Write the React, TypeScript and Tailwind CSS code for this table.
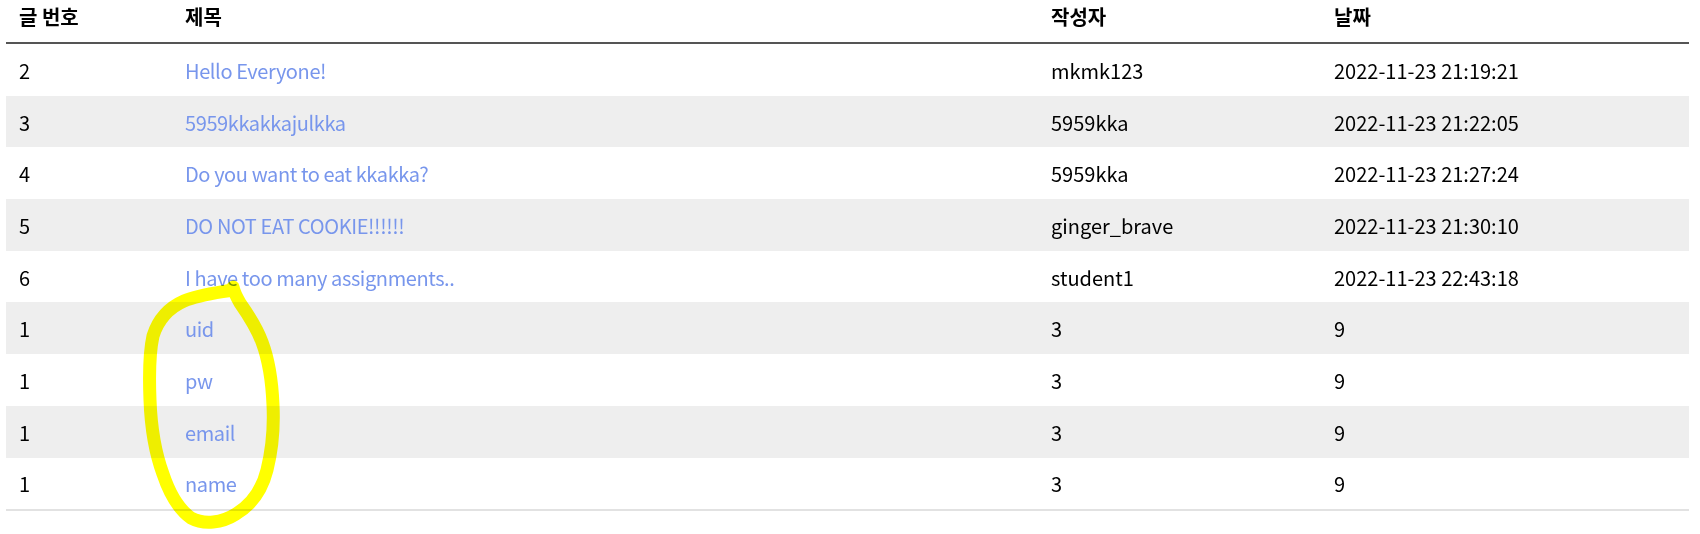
import React from "react";

const rows = [
  { no: "2", title: "Hello Everyone!", author: "mkmk123", date: "2022-11-23 21:19:21" },
  { no: "3", title: "5959kkakkajulkka", author: "5959kka", date: "2022-11-23 21:22:05" },
  { no: "4", title: "Do you want to eat kkakka?", author: "5959kka", date: "2022-11-23 21:27:24" },
  { no: "5", title: "DO NOT EAT COOKIE!!!!!!", author: "ginger_brave", date: "2022-11-23 21:30:10" },
  { no: "6", title: "I have too many assignments..", author: "student1", date: "2022-11-23 22:43:18" },
  { no: "1", title: "uid", author: "3", date: "9" },
  { no: "1", title: "pw", author: "3", date: "9" },
  { no: "1", title: "email", author: "3", date: "9" },
  { no: "1", title: "name", author: "3", date: "9" },
];

export default function App() {
  return (
    <div
      className="relative w-[1700px] h-[534px] bg-white text-black text-[20px] overflow-hidden"
      style={{ fontFamily: '"Noto Sans CJK KR", "Noto Sans", sans-serif' }}
    >
      <div className="ml-[6px] w-[1683px]">
        <div className="grid grid-cols-[166px_866px_283px_368px] h-[44px] border-b-2 border-[#555555] font-bold">
          <div className="pl-[13px] pt-[4px] leading-[26px]">글 번호</div>
          <div className="pl-[13px] pt-[4px] leading-[26px]">제목</div>
          <div className="pl-[13px] pt-[4px] leading-[26px]">작성자</div>
          <div className="pl-[13px] pt-[4px] leading-[26px]">날짜</div>
        </div>
        {rows.map((r, i) => (
          <div
            key={i}
            className={`grid grid-cols-[166px_866px_283px_368px] h-[51.7px] items-center leading-[26px] pt-[2px] ${
              i % 2 === 1 ? "bg-[#eeeeee]" : "bg-white"
            }`}
          >
            <div className="pl-[13px]">{r.no}</div>
            <div className="pl-[13px] text-[#7896ec] tracking-[-0.4px]">{r.title}</div>
            <div className="pl-[13px]">{r.author}</div>
            <div className="pl-[13px]">{r.date}</div>
          </div>
        ))}
        <div className="h-[2px] bg-[#e2e2e2]" />
      </div>
      <svg
        className="absolute left-0 top-0 pointer-events-none mix-blend-multiply"
        width="1700"
        height="534"
        viewBox="0 0 1700 534"
      >
        <path
          d="M232 290 C 215 293, 198 295, 184 301 C 168 308, 158 320, 153 336 C 149 354, 149 375, 150 400 C 151 428, 156 455, 163 474 C 169 492, 177 508, 191 518 C 204 525, 222 523, 236 514 C 251 505, 262 490, 267 470 C 272 450, 274 425, 273 405 C 272 380, 268 358, 262 342 C 256 326, 247 313, 240 303 C 236 296, 234 292, 233 287"
          fill="none"
          stroke="#ffff00"
          strokeWidth="13"
          strokeLinecap="round"
          strokeLinejoin="round"
        />
      </svg>
    </div>
  );
}
